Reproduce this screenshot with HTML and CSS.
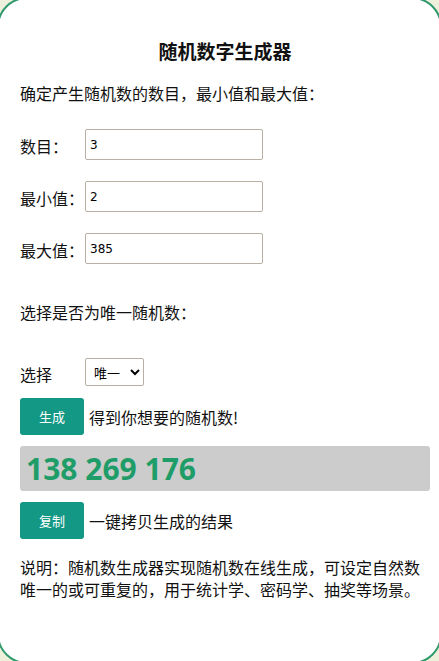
FILE: index.html
```html
<!DOCTYPE html>
<html lang="zh-CN">
<head>
    <meta charset="UTF-8">
    <meta name="viewport" content="width=device-width, initial-scale=1.0">
    <title>随机数字生成器</title>
    <link rel="stylesheet" href="styles.css">
</head>
<body>

    <div class="container">
        <h2>随机数字生成器</h2>
        <p class="intro">确定产生随机数的数目，最小值和最大值：</p>

        <div class="field">
            <label for="count">数目：</label>
            <input type="text" id="count" value="3">
        </div>
        <div class="field">
            <label for="min">最小值：</label>
            <input type="text" id="min" value="2">
        </div>
        <div class="field">
            <label for="max">最大值：</label>
            <input type="text" id="max" value="385">
        </div>

        <p class="question">选择是否为唯一随机数：</p>

        <div class="field choose">
            <label for="unique">选择</label>
            <select id="unique">
                <option>唯一</option>
                <option>可重复</option>
            </select>
        </div>

        <div class="action">
            <button>生成</button>
            <span>得到你想要的随机数!</span>
        </div>

        <div class="result">138 269 176</div>

        <div class="action">
            <button>复制</button>
            <span>一键拷贝生成的结果</span>
        </div>

        <p class="note">说明：随机数生成器实现随机数在线生成，可设定自然数唯一的或可重复的，用于统计学、密码学、抽奖等场景。</p>
    </div>

</body>
</html>
```

FILE: styles.css
```css
html, body {
    height: 100%;
}

body {
    margin: 0;
    background-color: #eef0dc;
    font-family: "Noto Sans CJK SC", "Noto Sans", sans-serif;
    font-size: 16px;
    color: #111;
    overflow: hidden;
}

/* card is a little bigger than the window, only its round corners show */
.container {
    box-sizing: border-box;
    height: 667px;
    margin: -3px -3px 0 -3px;
    padding: 0 10px 0 21px;
    background: white;
    border: 2px solid #2f9a6c;
    border-radius: 30px;
}

h2 {
    margin: 39px 0 0;
    font-size: 19px;
    line-height: 26px;
    text-align: center;
    font-weight: bold;
}

.intro {
    margin: 17px 0 0;
    line-height: 24px;
}

.field {
    display: flex;
    align-items: center;
    margin-top: 21px;
}

.intro + .field {
    margin-top: 24px;
}

.field label {
    width: 65px;
    line-height: 24px;
    padding-top: 2px;
}

.field input {
    box-sizing: border-box;
    width: 178px;
    height: 31px;
    padding: 0 4px;
    border: 1px solid #b9afa5;
    border-radius: 2px;
    font-family: "DejaVu Sans", sans-serif;
    font-size: 12px;
    color: #000;
}

.question {
    margin: 36px 0 0;
    line-height: 24px;
}

.field.choose {
    margin-top: 34px;
}

.field.choose label {
    padding-top: 4px;
}

select {
    box-sizing: border-box;
    width: 59px;
    height: 28px;
    padding: 0 2px 0 4px;
    border: 1px solid #b9afa5;
    border-radius: 2px;
    background: white;
    font-family: "Noto Sans CJK SC", sans-serif;
    font-size: 13px;
    color: #000;
}

.action {
    display: flex;
    align-items: center;
    margin-top: 11px;
}

.choose + .action {
    margin-top: 12px;
}

.action button {
    width: 64px;
    height: 37px;
    margin-right: 5px;
    border: none;
    border-radius: 3px;
    background-color: #129885;
    color: white;
    font-family: "Noto Sans CJK SC", sans-serif;
    font-size: 13px;
    cursor: pointer;
}

.action button:hover {
    background-color: #0f8575;
}

.result {
    height: 45px;
    margin-top: 11px;
    padding-left: 6px;
    background-color: #cccccc;
    border-radius: 3px;
    color: #1e9d68;
    font-family: "Open Sans", "Noto Sans", sans-serif;
    font-size: 30px;
    font-weight: bold;
    line-height: 45px;
}

.note {
    margin: 17px 0 0;
    line-height: 22px;
}
```
